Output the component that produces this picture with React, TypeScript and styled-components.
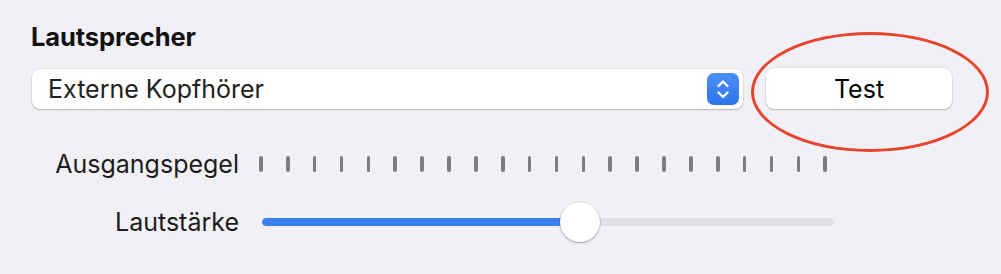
import React from "react";
import styled, { createGlobalStyle } from "styled-components";

const Global = createGlobalStyle`
  html, body { margin: 0; padding: 0; background: #f1f0f5; }
  body { font-family: Inter, "Noto Sans", "Liberation Sans", sans-serif; -webkit-font-smoothing: antialiased; }
`;

const Page = styled.div`
  position: relative;
  width: 1001px;
  height: 274px;
  box-sizing: border-box;
  padding: 22px 0 0 31px;
  background: #f1f0f5;
  overflow: hidden;
`;

const Title = styled.h2`
  margin: 0;
  font-size: 25.5px;
  font-weight: 700;
  line-height: 30px;
  color: #111;
  letter-spacing: -0.1px;
`;

const DeviceRow = styled.div`
  display: flex;
  align-items: center;
  gap: 23px;
  margin-top: 17px;
  padding-left: 1px;
`;

const Popup = styled.div`
  display: flex;
  align-items: center;
  justify-content: space-between;
  box-sizing: border-box;
  width: 711px;
  height: 40px;
  padding: 0 4px 0 16px;
  background: #fff;
  border-radius: 8px;
  box-shadow: 0 0 0 0.5px rgba(0, 0, 0, 0.08), 0 1px 1.5px rgba(0, 0, 0, 0.22);
  font-size: 25px;
  color: #222;
`;

const Stepper = styled.span`
  display: flex;
  align-items: center;
  justify-content: center;
  width: 32px;
  height: 32px;
  border-radius: 7px;
  background: linear-gradient(#4a8ff7, #2f74ec);
`;

const Button = styled.button`
  box-sizing: border-box;
  width: 186px;
  height: 41px;
  border: none;
  border-radius: 8px;
  background: #fff;
  box-shadow: 0 0 0 0.5px rgba(0, 0, 0, 0.08), 0 1px 1.5px rgba(0, 0, 0, 0.22);
  font-family: inherit;
  font-size: 25px;
  color: #000;
  padding: 0;
  margin-top: -1px;
`;

const Annotation = styled.div`
  position: absolute;
  left: 751px;
  top: 32px;
  width: 238px;
  height: 120px;
  box-sizing: border-box;
  border: 3px solid #e8432d;
  border-radius: 50%;
  pointer-events: none;
`;

const Grid = styled.div`
  display: grid;
  grid-template-columns: 208px 1fr;
  column-gap: 20px;
  row-gap: 23px;
  margin-top: 40px;
  align-items: center;
`;

const Label = styled.span`
  text-align: right;
  font-size: 25px;
  color: #1c1c1c;
  line-height: 30px;
`;

const Meter = styled.div`
  display: flex;
  align-items: center;
  gap: 23.2px;
  height: 30px;
`;

const Tick = styled.span`
  width: 3.7px;
  height: 16px;
  border-radius: 2px;
  background: #7d7d7f;
`;

const Slider = styled.div`
  position: relative;
  width: 572px;
  height: 40px;
  margin-left: 3px;
  display: flex;
  align-items: center;
`;

const Track = styled.div`
  width: 100%;
  height: 8px;
  border-radius: 4px;
  background: #e2e1e6;
  overflow: hidden;
`;

const Fill = styled.div`
  height: 100%;
  background: #3a7ff0;
  border-radius: 4px 0 0 4px;
`;

const Thumb = styled.div`
  position: absolute;
  top: 0;
  width: 40px;
  height: 40px;
  margin-left: -20px;
  border-radius: 50%;
  background: #fff;
  box-shadow: 0 0 0 0.5px rgba(0, 0, 0, 0.12), 0 1px 2px rgba(0, 0, 0, 0.3);
`;

export default function App() {
  const value = 318 / 572;
  return (
    <>
      <Global />
      <Page>
        <Title>Lautsprecher</Title>
        <DeviceRow>
          <Popup>
            <span>Externe Kopfhörer</span>
            <Stepper>
              <svg width="32" height="32" viewBox="0 0 32 32" fill="none" stroke="#fff" strokeWidth="2.4" strokeLinecap="round" strokeLinejoin="round">
                <path d="M11.5 13 L16 8.5 L20.5 13" />
                <path d="M11.5 19.5 L16 24 L20.5 19.5" />
              </svg>
            </Stepper>
          </Popup>
          <Button>Test</Button>
        </DeviceRow>
        <Grid>
          <Label>Ausgangspegel</Label>
          <Meter>
            {Array.from({ length: 22 }, (_, i) => (
              <Tick key={i} />
            ))}
          </Meter>
          <Label>Lautstärke</Label>
          <Slider>
            <Track>
              <Fill style={{ width: `${value * 100}%` }} />
            </Track>
            <Thumb style={{ left: `${value * 100}%` }} />
          </Slider>
        </Grid>
        <Annotation />
      </Page>
    </>
  );
}
